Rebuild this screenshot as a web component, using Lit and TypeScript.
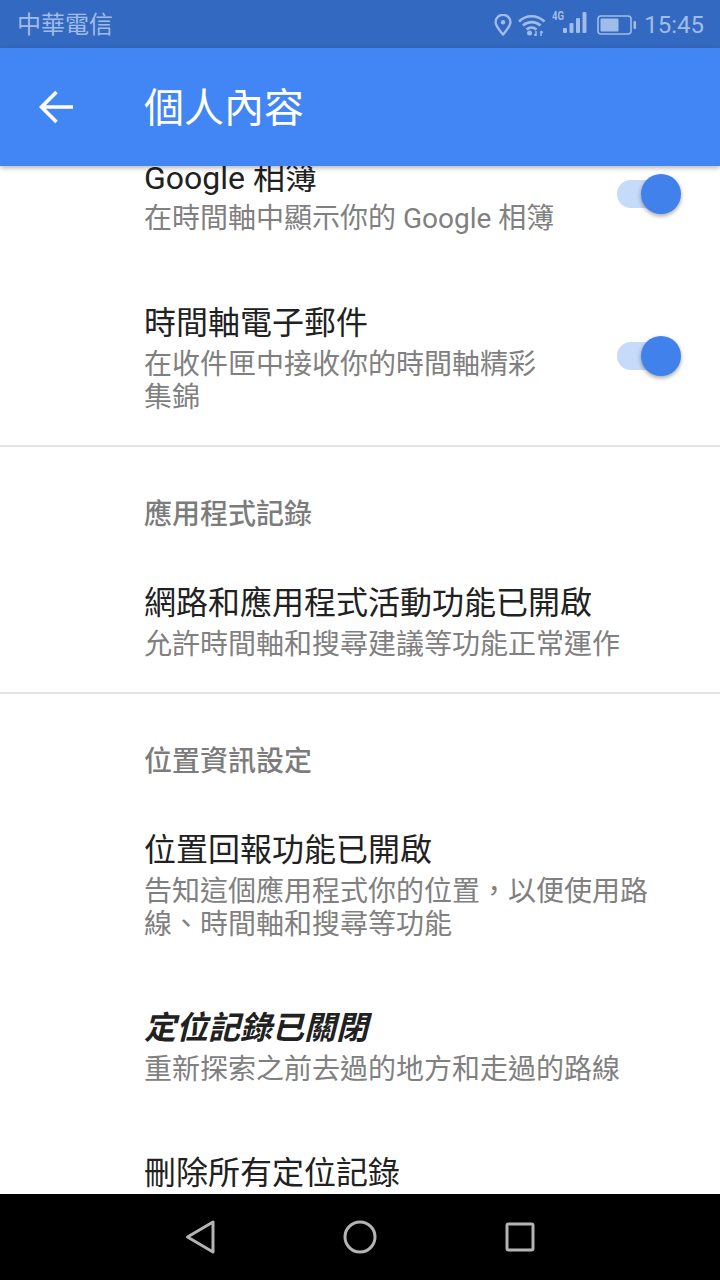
import { LitElement, html, css } from "lit";
import { customElement } from "lit/decorators.js";

@customElement("app-root")
export class AppRoot extends LitElement {
  static styles = css`
    :host { display: flex; flex-direction: column; width: 720px; height: 1280px; overflow: hidden; background: #fff; font-family: Roboto, "Noto Sans CJK TC", sans-serif; }
    .status { height: 48px; flex: none; background: #3369c0; display: flex; align-items: center; padding: 2px 16px 0 17px; box-sizing: border-box; color: #a0bce8; font-size: 24px; }
    .carrier { flex: 1; line-height: 46px; }
    .status svg { display: block; flex: none; }
    .pin { margin-right: 6px; margin-top: -1px; }
    .wifi { margin-right: 3px; margin-top: -1px; }
    .net { position: relative; width: 38px; height: 46px; margin-right: 10px; }
    .net span { position: absolute; left: 3px; top: 8px; font-size: 12px; line-height: 12px; font-weight: 700; transform: scaleX(.8); transform-origin: left; }
    .net svg { position: absolute; left: 14px; top: 9px; }
    .batt { margin-right: 7px; margin-top: -1px; }
    .time { font-size: 24px; line-height: 46px; }
    .bar { height: 118px; flex: none; background: #4285f4; display: flex; align-items: center; color: #fff; box-shadow: 0 2px 5px rgba(0,0,0,.28); position: relative; z-index: 1; }
    .bar svg { margin-left: 38px; margin-right: 70px; display: block; flex: none; }
    .bar h1 { margin: 4px 0 0; font-size: 40px; font-weight: 400; line-height: 114px; }
    .content { flex: 1; min-height: 0; overflow: hidden; padding-left: 144px; }
    .list { margin-top: -42px; }
    .row { padding: 33px 0; display: flex; align-items: center; }
    .row:has(+ .divider) { padding-bottom: 31px; }
    .text { width: 510px; }
    .row.sw .text { width: 416px; }
    .title { font-size: 32px; line-height: 42px; color: #212121; }
    .title.off { font-style: italic; font-weight: 700; }
    .sub { font-size: 28px; line-height: 33px; color: #808080; padding-top: 4px; }
    .row.sw:first-child .sub { padding-top: 3px; padding-bottom: 1px; }
    .switch { position: relative; width: 64px; height: 40px; margin: -5px 0 0 57px; flex: none; }
    .track { position: absolute; left: 0; top: 6px; width: 56px; height: 28px; border-radius: 14px; background: #c6daf9; }
    .thumb { position: absolute; left: 24px; top: 0; width: 40px; height: 40px; border-radius: 50%; background: #4081ec; box-shadow: 0 2px 4px rgba(0,0,0,.35); }
    .divider { height: 2px; background: #e4e4e4; margin-left: -144px; }
    .head { font-size: 28px; line-height: 33px; font-weight: 500; color: #7c7c7c; padding-top: 51px; padding-bottom: 18px; }
    .nav { height: 86px; flex: none; background: #000; display: flex; align-items: center; justify-content: center; gap: 120px; position: relative; z-index: 1; }
    .nav svg { display: block; }
  `;

  private row(title: string, sub?: string, sw = false, off = false) {
    return html`<div class="row ${sw ? "sw" : ""}">
      <div class="text">
        <div class="title ${off ? "off" : ""}">${title}</div>
        ${sub ? html`<div class="sub">${sub}</div>` : ""}
      </div>
      ${sw ? html`<div class="switch"><div class="track"></div><div class="thumb"></div></div>` : ""}
    </div>`;
  }

  render() {
    return html`
      <div class="status">
        <div class="carrier">中華電信</div>
        <svg class="pin" width="18" height="22" viewBox="0 0 18 22" fill="none" stroke="currentColor" stroke-width="2.4">
          <path d="M9 20.5C5 15.5 1.6 12 1.6 8.2a7.4 7.4 0 0 1 14.8 0C16.4 12 13 15.5 9 20.5z" stroke-linejoin="round"/>
          <circle cx="9" cy="8.2" r="2.2" fill="currentColor" stroke="none"/>
        </svg>
        <svg class="wifi" width="28" height="22" viewBox="0 0 28 22" fill="none" stroke="currentColor" stroke-width="2.6">
          <path d="M1 7.5C8 .5 19 .5 26.5 7.5"/>
          <path d="M5 11.5c5-4.5 12.5-4.5 17.5 0"/>
          <path d="M8.5 15.5c3-2.5 7-2.5 10 0"/>
          <circle cx="11.5" cy="19" r="2.5" fill="currentColor" stroke="none"/>
          <path d="M18 17v5M16.2 20.2l1.800 1.800M23 22v-5M24.800 18.800L23 17" stroke-width="1.5"/>
        </svg>
        <div class="net">
          <span>4G</span>
          <svg width="24" height="23" viewBox="0 0 24 23" fill="currentColor">
            <rect x="0" y="17" width="4" height="5" rx="1"/>
            <rect x="6.5" y="12" width="4" height="10" rx="1"/>
            <rect x="13" y="7" width="4" height="15" rx="1"/>
            <rect x="19.5" y="1" width="4" height="21" rx="1"/>
          </svg>
        </div>
        <svg class="batt" width="40" height="20" viewBox="0 0 40 20" fill="none">
          <rect x="1" y="1" width="33" height="18" rx="3" stroke="currentColor" stroke-width="1.6"/>
          <rect x="3.5" y="3.5" width="18" height="13" rx="1" fill="currentColor"/>
          <rect x="36.5" y="6" width="2.5" height="8" rx="1" fill="currentColor"/>
        </svg>
        <div class="time">15:45</div>
      </div>
      <div class="bar">
        <svg width="36" height="36" viewBox="0 0 36 36" fill="none" stroke="#fff" stroke-width="3.6">
          <path d="M35 18H5M18.5 3L3.5 18l15 15"/>
        </svg>
        <h1>個人內容</h1>
      </div>
      <div class="content">
        <div class="list">
          ${this.row("Google 相簿", "在時間軸中顯示你的 Google 相簿", true)}
          ${this.row("時間軸電子郵件", "在收件匣中接收你的時間軸精彩集錦", true)}
          <div class="divider"></div>
          <div class="head">應用程式記錄</div>
          ${this.row("網路和應用程式活動功能已開啟", "允許時間軸和搜尋建議等功能正常運作")}
          <div class="divider"></div>
          <div class="head">位置資訊設定</div>
          ${this.row("位置回報功能已開啟", "告知這個應用程式你的位置，以便使用路線、時間軸和搜尋等功能")}
          ${this.row("定位記錄已關閉", "重新探索之前去過的地方和走過的路線", false, true)}
          ${this.row("刪除所有定位記錄")}
        </div>
      </div>
      <div class="nav">
        <svg width="40" height="40" viewBox="0 0 40 40" fill="none" stroke="#b4b4b4" stroke-width="3" stroke-linejoin="round">
          <path d="M7.5 20L33 5v30z"/>
        </svg>
        <svg width="40" height="40" viewBox="0 0 40 40" fill="none" stroke="#b4b4b4" stroke-width="3">
          <circle cx="20" cy="20" r="15"/>
        </svg>
        <svg width="40" height="40" viewBox="0 0 40 40" fill="none" stroke="#b4b4b4" stroke-width="3" stroke-linejoin="round">
          <rect x="7" y="7" width="26" height="26" rx="1.5"/>
        </svg>
      </div>
    `;
  }
}
